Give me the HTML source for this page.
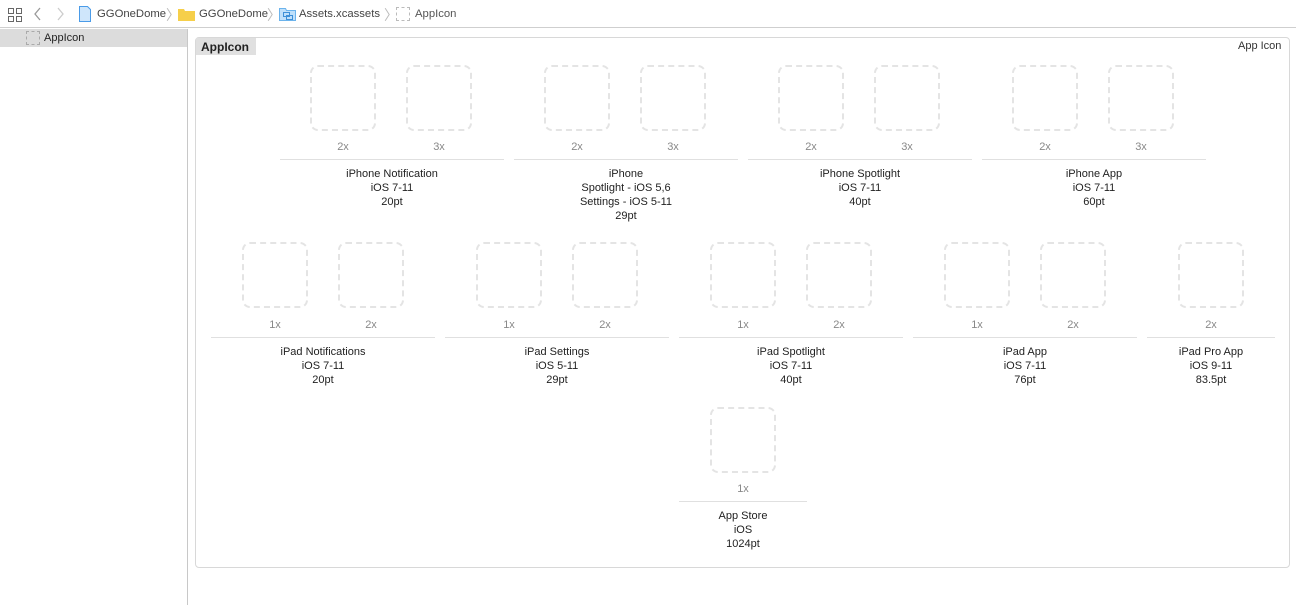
<!DOCTYPE html><html><head><meta charset="utf-8"><style>
*{margin:0;padding:0;box-sizing:border-box}
body{width:1296px;height:605px;background:#fff;font-family:"Liberation Sans",sans-serif;position:relative;overflow:hidden;color:#222}
.a{position:absolute}
.ic{position:absolute;width:66px;height:66px;border:2px dashed #e4e4e4;border-radius:8px}
.sc{position:absolute;width:66px;text-align:center;font-size:11px;color:#888;line-height:14px}
.ln{position:absolute;height:1px;background:#e0e0e0}
.tx{position:absolute;text-align:center;font-size:11px;line-height:14px;color:#222}
.bc{font-size:11.3px;color:#444;top:8px}
</style></head><body>
<div class="a" style="left:0;top:0;width:1296px;height:28px;border-bottom:1px solid #cfcfcf;background:#fff"></div>
<svg class="a" style="left:8px;top:8px" width="14" height="14"><g fill="none" stroke="#666"><rect x="0.5" y="0.5" width="5" height="5"/><rect x="8.5" y="0.5" width="5" height="5"/><rect x="0.5" y="8.5" width="5" height="5"/><rect x="8.5" y="8.5" width="5" height="5"/></g></svg>
<svg class="a" style="left:33px;top:7px" width="40" height="14"><path d="M7 1 L2 7 L7 13" stroke="#999" fill="none" stroke-width="1.3"/><path d="M25 1 L30 7 L25 13" stroke="#ccc" fill="none" stroke-width="1.3"/></svg>
<svg class="a" style="left:79px;top:6px" width="12" height="16"><path d="M0.5 0.5h8l3 3v12h-11z" fill="#cfe6fb" stroke="#4a9be8"/></svg>
<div class="a bc" style="left:97px">GGOneDome</div>
<div class="a" style="left:166px;top:5px;color:#bbb;font-size:14px">〉</div>
<svg class="a" style="left:178px;top:7px" width="17" height="14"><path d="M0 2h6l1 2h10v10H0z" fill="#f6cf4a"/></svg>
<div class="a bc" style="left:199px">GGOneDome</div>
<div class="a" style="left:267px;top:5px;color:#bbb;font-size:14px">〉</div>
<svg class="a" style="left:279px;top:7px" width="17" height="14"><path d="M0.5 1.5h6l1 2h9v10H0.5z" fill="#bfe0fb" stroke="#6bb3ec"/><rect x="4.5" y="5.5" width="6" height="4" fill="none" stroke="#3d8fd8"/><rect x="7.5" y="8.5" width="6" height="4" fill="none" stroke="#3d8fd8"/></svg>
<div class="a bc" style="left:299px">Assets.xcassets</div>
<div class="a" style="left:384px;top:5px;color:#bbb;font-size:14px">〉</div>
<div class="a" style="left:396px;top:7px;width:14px;height:14px;border:1px dashed #bbb"></div>
<div class="a bc" style="left:415px;color:#555">AppIcon</div>
<div class="a" style="left:0;top:29px;width:187px;height:18px;background:#dcdcdc"></div>
<div class="a" style="left:26px;top:31px;width:14px;height:14px;border:1px dashed #aaa"></div>
<div class="a" style="left:44px;top:32px;font-size:11px;color:#222">AppIcon</div>
<div class="a" style="left:187px;top:29px;width:1px;height:576px;background:#c8c8c8"></div>
<div class="a" style="left:195px;top:37px;width:1095px;height:531px;border:1px solid #d8d8d8;border-radius:4px"></div>
<div class="a" style="left:196px;top:38px;width:60px;height:17px;background:#e0e0e0;font-size:12px;font-weight:bold;padding:2px 0 0 5px">AppIcon</div>
<div class="a" style="left:1238px;top:40px;font-size:11px;color:#333">App Icon</div>

<div class="ic" style="left:310px;top:65px"></div><div class="ic" style="left:406px;top:65px"></div>
<div class="ic" style="left:544px;top:65px"></div><div class="ic" style="left:640px;top:65px"></div>
<div class="ic" style="left:778px;top:65px"></div><div class="ic" style="left:874px;top:65px"></div>
<div class="ic" style="left:1012px;top:65px"></div><div class="ic" style="left:1108px;top:65px"></div>
<div class="sc" style="left:310px;top:140px">2x</div><div class="sc" style="left:406px;top:140px">3x</div>
<div class="sc" style="left:544px;top:140px">2x</div><div class="sc" style="left:640px;top:140px">3x</div>
<div class="sc" style="left:778px;top:140px">2x</div><div class="sc" style="left:874px;top:140px">3x</div>
<div class="sc" style="left:1012px;top:140px">2x</div><div class="sc" style="left:1108px;top:140px">3x</div>
<div class="ln" style="left:280px;top:159px;width:224px"></div><div class="ln" style="left:514px;top:159px;width:224px"></div>
<div class="ln" style="left:748px;top:159px;width:224px"></div><div class="ln" style="left:982px;top:159px;width:224px"></div>
<div class="tx" style="left:280px;top:167px;width:224px">iPhone Notification<br>iOS 7-11<br>20pt</div>
<div class="tx" style="left:514px;top:167px;width:224px">iPhone<br>Spotlight - iOS 5,6<br>Settings - iOS 5-11<br>29pt</div>
<div class="tx" style="left:748px;top:167px;width:224px">iPhone Spotlight<br>iOS 7-11<br>40pt</div>
<div class="tx" style="left:982px;top:167px;width:224px">iPhone App<br>iOS 7-11<br>60pt</div>

<div class="ic" style="left:242px;top:242px"></div><div class="ic" style="left:338px;top:242px"></div>
<div class="ic" style="left:476px;top:242px"></div><div class="ic" style="left:572px;top:242px"></div>
<div class="ic" style="left:710px;top:242px"></div><div class="ic" style="left:806px;top:242px"></div>
<div class="ic" style="left:944px;top:242px"></div><div class="ic" style="left:1040px;top:242px"></div>
<div class="ic" style="left:1178px;top:242px"></div>
<div class="sc" style="left:242px;top:318px">1x</div><div class="sc" style="left:338px;top:318px">2x</div>
<div class="sc" style="left:476px;top:318px">1x</div><div class="sc" style="left:572px;top:318px">2x</div>
<div class="sc" style="left:710px;top:318px">1x</div><div class="sc" style="left:806px;top:318px">2x</div>
<div class="sc" style="left:944px;top:318px">1x</div><div class="sc" style="left:1040px;top:318px">2x</div>
<div class="sc" style="left:1178px;top:318px">2x</div>
<div class="ln" style="left:211px;top:337px;width:224px"></div><div class="ln" style="left:445px;top:337px;width:224px"></div>
<div class="ln" style="left:679px;top:337px;width:224px"></div><div class="ln" style="left:913px;top:337px;width:224px"></div>
<div class="ln" style="left:1147px;top:337px;width:128px"></div>
<div class="tx" style="left:211px;top:345px;width:224px">iPad Notifications<br>iOS 7-11<br>20pt</div>
<div class="tx" style="left:445px;top:345px;width:224px">iPad Settings<br>iOS 5-11<br>29pt</div>
<div class="tx" style="left:679px;top:345px;width:224px">iPad Spotlight<br>iOS 7-11<br>40pt</div>
<div class="tx" style="left:913px;top:345px;width:224px">iPad App<br>iOS 7-11<br>76pt</div>
<div class="tx" style="left:1147px;top:345px;width:128px">iPad Pro App<br>iOS 9-11<br>83.5pt</div>

<div class="ic" style="left:710px;top:407px"></div>
<div class="sc" style="left:710px;top:482px">1x</div>
<div class="ln" style="left:679px;top:501px;width:128px"></div>
<div class="tx" style="left:679px;top:509px;width:128px">App Store<br>iOS<br>1024pt</div>
</body></html>
